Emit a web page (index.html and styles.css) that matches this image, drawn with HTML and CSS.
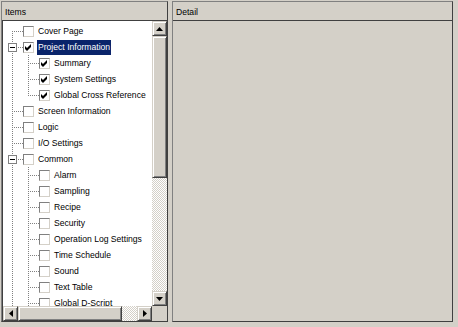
FILE: index.html
```html
<!DOCTYPE html>
<html lang="en">
<head>
    <meta charset="UTF-8">
    <title>Report Items</title>
    <link rel="stylesheet" href="styles.css">
</head>
<body>
<div class="app">

    <div class="panel items-panel">
        <div class="panel-header">Items</div>
        <div class="tree-frame">
            <div class="tree">
                <div class="row"><span class="g first"></span><span class="cb"></span><span class="label">Cover Page</span></div>
                <div class="row"><span class="g tee"><span class="expander"></span></span><span class="cb checked"><svg viewBox="0 0 7 7"><path d="M0 2L2 4L6 0L6 3L2 7L0 5Z"/></svg></span><span class="label selected">Project Information</span></div>
                <div class="row"><span class="g pipe"></span><span class="g tee"></span><span class="cb checked"><svg viewBox="0 0 7 7"><path d="M0 2L2 4L6 0L6 3L2 7L0 5Z"/></svg></span><span class="label">Summary</span></div>
                <div class="row"><span class="g pipe"></span><span class="g tee"></span><span class="cb checked"><svg viewBox="0 0 7 7"><path d="M0 2L2 4L6 0L6 3L2 7L0 5Z"/></svg></span><span class="label">System Settings</span></div>
                <div class="row"><span class="g pipe"></span><span class="g last"></span><span class="cb checked"><svg viewBox="0 0 7 7"><path d="M0 2L2 4L6 0L6 3L2 7L0 5Z"/></svg></span><span class="label">Global Cross Reference</span></div>
                <div class="row"><span class="g tee"></span><span class="cb"></span><span class="label">Screen Information</span></div>
                <div class="row"><span class="g tee"></span><span class="cb"></span><span class="label">Logic</span></div>
                <div class="row"><span class="g tee"></span><span class="cb"></span><span class="label">I/O Settings</span></div>
                <div class="row"><span class="g tee"><span class="expander"></span></span><span class="cb"></span><span class="label">Common</span></div>
                <div class="row"><span class="g pipe"></span><span class="g tee"></span><span class="cb"></span><span class="label">Alarm</span></div>
                <div class="row"><span class="g pipe"></span><span class="g tee"></span><span class="cb"></span><span class="label">Sampling</span></div>
                <div class="row"><span class="g pipe"></span><span class="g tee"></span><span class="cb"></span><span class="label">Recipe</span></div>
                <div class="row"><span class="g pipe"></span><span class="g tee"></span><span class="cb"></span><span class="label">Security</span></div>
                <div class="row"><span class="g pipe"></span><span class="g tee"></span><span class="cb"></span><span class="label">Operation Log Settings</span></div>
                <div class="row"><span class="g pipe"></span><span class="g tee"></span><span class="cb"></span><span class="label">Time Schedule</span></div>
                <div class="row"><span class="g pipe"></span><span class="g tee"></span><span class="cb"></span><span class="label">Sound</span></div>
                <div class="row"><span class="g pipe"></span><span class="g tee"></span><span class="cb"></span><span class="label">Text Table</span></div>
                <div class="row"><span class="g pipe"></span><span class="g tee"></span><span class="cb"></span><span class="label">Global D-Script</span></div>
            </div>

            <div class="vscroll">
                <div class="sb-btn"><svg width="7" height="4" viewBox="0 0 7 4"><path d="M3.5 0L7 4H0Z"/></svg></div>
                <div class="sb-thumb v-thumb"></div>
                <div class="sb-track"></div>
                <div class="sb-btn"><svg width="7" height="4" viewBox="0 0 7 4"><path d="M0 0H7L3.5 4Z"/></svg></div>
            </div>

            <div class="hscroll">
                <div class="sb-btn"><svg width="4" height="7" viewBox="0 0 4 7"><path d="M0 3.5L4 0V7Z"/></svg></div>
                <div class="sb-thumb h-thumb"></div>
                <div class="sb-track"></div>
                <div class="sb-btn"><svg width="4" height="7" viewBox="0 0 4 7"><path d="M0 0L4 3.5L0 7Z"/></svg></div>
            </div>

            <div class="sb-corner"></div>
        </div>
    </div>

    <div class="panel detail-panel">
        <div class="panel-header">Detail</div>
        <div class="detail-body"></div>
    </div>

</div>
</body>
</html>
```

FILE: styles.css
```css
/* Base */
body {
    margin: 0;
    background-color: #d4d0c8;
    font-family: "Liberation Sans", Arial, sans-serif;
    font-size: 8.6px;
    color: #000;
}

.app {
    display: flex;
    gap: 4px;
    height: 327px;
    padding: 1px 5px 5px 1px;
    box-sizing: border-box;
}

/* Panels */
.panel {
    display: flex;
    flex-direction: column;
    border-top: 1px solid #808080;
    border-left: 1px solid #808080;
    border-right: 1px solid #404040;
    border-bottom: 1px solid #404040;
}

.items-panel {
    width: 165px;
}

.detail-panel {
    flex: 1;
}

.panel-header {
    height: 18px;
    line-height: 20px;
    padding-left: 3px;
    border-bottom: 1px solid #404040;
}

.detail-body {
    flex: 1;
}

/* Tree area with scrollbars */
.tree-frame {
    flex: 1;
    display: grid;
    grid-template-columns: 1fr 15px;
    grid-template-rows: 1fr 15px;
    border-left: 1px solid #404040;
    overflow: hidden;
}

.tree {
    background: #fff;
    padding: 2px 0 0 1px;
    overflow: hidden;
}

.row {
    display: flex;
    align-items: center;
    height: 16px;
    white-space: nowrap;
}

/* Tree guide lines */
.g {
    flex: none;
    align-self: stretch;
    position: relative;
    width: 16px;
}

.g.pipe {
    background: repeating-linear-gradient(to bottom, #808080 0 1px, transparent 1px 2px) 8px 0 / 1px 100% no-repeat;
}

.g.tee,
.g.first,
.g.last {
    width: 19px;
}

.g.tee {
    background:
        repeating-linear-gradient(to right, #808080 0 1px, transparent 1px 2px) 8px 8px / 11px 1px no-repeat,
        repeating-linear-gradient(to bottom, #808080 0 1px, transparent 1px 2px) 8px 0 / 1px 100% no-repeat;
}

.g.first {
    background:
        repeating-linear-gradient(to right, #808080 0 1px, transparent 1px 2px) 8px 8px / 11px 1px no-repeat,
        repeating-linear-gradient(to bottom, #808080 0 1px, transparent 1px 2px) 8px 8px / 1px 8px no-repeat;
}

.g.last {
    background:
        repeating-linear-gradient(to right, #808080 0 1px, transparent 1px 2px) 8px 8px / 11px 1px no-repeat,
        repeating-linear-gradient(to bottom, #808080 0 1px, transparent 1px 2px) 8px 0 / 1px 9px no-repeat;
}

/* minus box drawn over the guide line */
.expander {
    position: absolute;
    left: 4px;
    top: 4px;
    width: 7px;
    height: 7px;
    border: 1px solid #808080;
    background: #fff;
}

.expander::after {
    content: "";
    position: absolute;
    left: 1px;
    top: 3px;
    width: 5px;
    height: 1px;
    background: #000;
}

/* Checkboxes */
.cb {
    flex: none;
    width: 9px;
    height: 9px;
    border-top: 1px solid #808080;
    border-left: 1px solid #808080;
    border-right: 1px solid #d4d0c8;
    border-bottom: 1px solid #d4d0c8;
    background: #fff;
    display: flex;
    align-items: center;
    justify-content: center;
}

.cb svg {
    width: 7px;
    height: 7px;
    fill: #000;
}

.label {
    margin-left: 3px;
    padding: 2px 1px;
    line-height: 11px;
}

.label.selected {
    background: #0a246a;
    color: #fff;
}

/* Scrollbars */
.vscroll {
    display: flex;
    flex-direction: column;
}

.hscroll {
    display: flex;
}

.sb-btn {
    flex: none;
    width: 15px;
    height: 15px;
    box-sizing: border-box;
    border: 1px solid;
    border-color: #d4d0c8 #404040 #404040 #d4d0c8;
    box-shadow: inset 1px 1px #fff, inset -1px -1px #808080;
    background: #d4d0c8;
    display: flex;
    align-items: center;
    justify-content: center;
}

.sb-btn svg {
    fill: #000;
}

.sb-thumb {
    flex: none;
    box-sizing: border-box;
    border: 1px solid;
    border-color: #d4d0c8 #404040 #404040 #d4d0c8;
    box-shadow: inset 1px 1px #fff, inset -1px -1px #808080;
    background: #d4d0c8;
}

.v-thumb {
    height: 142px;
}

.h-thumb {
    width: 104px;
}

.sb-track {
    flex: 1;
    background: repeating-conic-gradient(#fff 0 25%, #d4d0c8 0 50%) 0 0 / 2px 2px;
}

.sb-corner {
    background: #d4d0c8;
}
```
